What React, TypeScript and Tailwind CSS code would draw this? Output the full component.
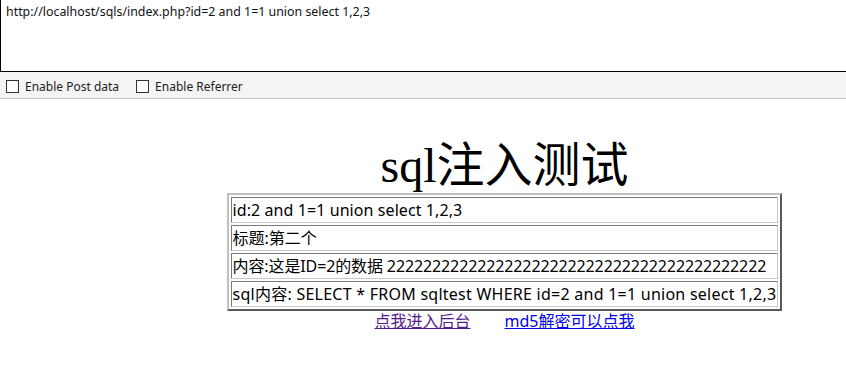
const ROWS: { text: string; track: string }[] = [
  { text: "id:2 and 1=1 union select 1,2,3", track: "tracking-[0.08px]" },
  { text: "标题:第二个", track: "tracking-normal" },
  { text: "内容:这是ID=2的数据 222222222222222222222222222222222222222222", track: "tracking-[-0.12px]" },
  { text: "sql内容: SELECT * FROM sqltest WHERE id=2 and 1=1 union select 1,2,3", track: "tracking-[0.25px]" },
];

const ui = { fontFamily: '"Noto Sans", "Noto Sans CJK SC", sans-serif' };

function Check({ label }: { label: string }) {
  return (
    <label className="flex items-center gap-[6px]">
      <span className="block h-[13px] w-[13px] border border-[#333] bg-white" />
      <span className="text-[12px] leading-[16px] text-[#222]">{label}</span>
    </label>
  );
}

export default function App() {
  return (
    <div className="h-[385px] w-[846px] overflow-hidden bg-white" style={ui}>
      <div className="h-[72px] border-b border-l border-black bg-white px-[5px] pt-[4px] text-[12.4px] leading-[16px] text-[#111]">
        http://localhost/sqls/index.php?id=2 and 1=1 union select 1,2,3
      </div>
      <div className="flex h-[27px] items-center gap-[17px] border-b border-[#c4c4c4] bg-[#f4f4f4] pl-[6px] pt-[3px]">
        <Check label="Enable Post data" />
        <Check label="Enable Referrer" />
      </div>

      <div className="flex flex-col items-center pl-[163px]">
        <h1
          className="mt-[40px] text-[48px] leading-[54px] text-black"
          style={{ fontFamily: '"Liberation Serif", "Noto Sans CJK SC", serif' }}
        >
          sql注入测试
        </h1>
        <table className="w-[555px] border-separate border-spacing-[2px] border-2 border-t-[#c0c0c0] border-l-[#c0c0c0] border-b-[#5a5a5a] border-r-[#5a5a5a]">
          <tbody>
            {ROWS.map((r) => (
              <tr key={r.text}>
                <td
                  className={`whitespace-nowrap border border-t-[#7a7a7a] border-l-[#7a7a7a] border-b-[#c8c8c8] border-r-[#c8c8c8] p-[1px] text-[16px] leading-[22px] text-black ${r.track}`}
                >
                  {r.text}
                </td>
              </tr>
            ))}
          </tbody>
        </table>
        <div className="flex gap-[34px] text-[16px] leading-[21px]">
          <a className="text-[#551a8b] underline" href="#">
            点我进入后台
          </a>
          <a className="text-[#0000ee] underline" href="#">
            md5解密可以点我
          </a>
        </div>
      </div>
    </div>
  );
}
